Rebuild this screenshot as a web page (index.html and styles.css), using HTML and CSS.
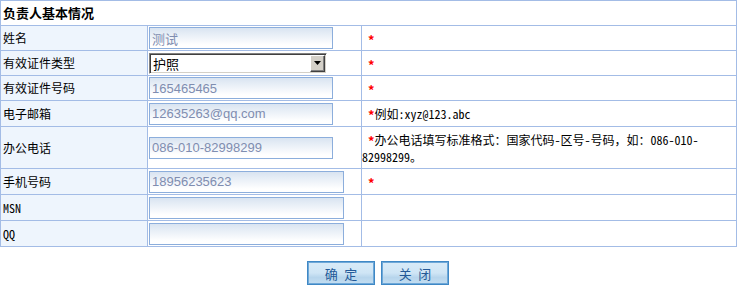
FILE: index.html
```html
<!DOCTYPE html>
<html lang="zh-CN">
<head>
    <meta charset="UTF-8">
    <title>负责人基本情况</title>
    <link rel="stylesheet" href="styles.css">
</head>
<body>
    <!-- 负责人基本情况 -->
    <table class="info-table">
        <colgroup>
            <col class="col-label">
            <col class="col-field">
            <col>
        </colgroup>
        <tr class="title-row">
            <td colspan="3">负责人基本情况</td>
        </tr>
        <tr class="row">
            <td class="label">姓名</td>
            <td class="field"><input type="text" class="txt" value="测试"></td>
            <td class="note"><span class="req">*</span></td>
        </tr>
        <tr class="row">
            <td class="label">有效证件类型</td>
            <td class="field">
                <span class="select-wrap">
                    <select class="sel">
                        <option>护照</option>
                        <option>身份证</option>
                    </select>
                    <span class="select-btn">
                        <svg width="7" height="4" viewBox="0 0 7 4"><path d="M0 0h7L3.5 4z" fill="#000"/></svg>
                    </span>
                </span>
            </td>
            <td class="note"><span class="req">*</span></td>
        </tr>
        <tr class="row">
            <td class="label">有效证件号码</td>
            <td class="field"><input type="text" class="txt" value="165465465"></td>
            <td class="note"><span class="req">*</span></td>
        </tr>
        <tr class="row-lg">
            <td class="label">电子邮箱</td>
            <td class="field"><input type="text" class="txt" value="12635263@qq.com"></td>
            <td class="note"><span class="req">*</span>例如:xyz@123.abc</td>
        </tr>
        <tr class="row-tall">
            <td class="label">办公电话</td>
            <td class="field"><input type="text" class="txt" value="086-010-82998299"></td>
            <td class="note"><span class="req">*</span>办公电话填写标准格式：国家代码-区号-号码，如：086-010-<br>82998299。</td>
        </tr>
        <tr class="row-lg">
            <td class="label">手机号码</td>
            <td class="field"><input type="text" class="txt txt-wide" value="18956235623"></td>
            <td class="note"><span class="req">*</span></td>
        </tr>
        <tr class="row-lg">
            <td class="label">MSN</td>
            <td class="field"><input type="text" class="txt txt-wide"></td>
            <td class="note"></td>
        </tr>
        <tr class="row-lg">
            <td class="label">QQ</td>
            <td class="field"><input type="text" class="txt txt-wide"></td>
            <td class="note"></td>
        </tr>
    </table>

    <div class="actions">
        <button class="btn">确 定</button>
        <button class="btn">关 闭</button>
    </div>
</body>
</html>
```

FILE: styles.css
```css
body {
    margin: 0;
    padding: 0;
    background-color: #ffffff;
    font-family: "Noto Sans Mono CJK SC", "Noto Sans CJK SC", sans-serif;
    font-size: 12px;
    color: #000000;
}
.info-table {
    width: 737px;
    border-collapse: collapse;
    table-layout: fixed;
}
.col-label {
    width: 147px;
}
.col-field {
    width: 214px;
}
.info-table td {
    border: 1px solid #a3bce6;
    padding: 0;
    vertical-align: middle;
}
.title-row td {
    height: 24px;
    padding-left: 2px;
    font-size: 13px;
    font-weight: bold;
    line-height: 16px;
}
.row td {
    height: 24px;
}
.row-lg td {
    height: 25px;
}
.row-tall td {
    height: 41px;
}
.info-table .label {
    padding-left: 2px;
    background-color: #eef5fd;
    line-height: 16px;
}
.info-table .field {
    padding-left: 1px;
}
.note {
    text-indent: 6px;
    line-height: 17px;
}
.req {
    color: #ff0000;
    font-size: 13px;
    font-weight: bold;
    vertical-align: -2px;
    line-height: 1;
}
.txt {
    box-sizing: border-box;
    width: 184px;
    height: 22px;
    margin: 0;
    padding: 0 2px;
    border: 1px solid #8caedc;
    background: linear-gradient(to bottom, #d9e4f1, #ffffff 85%);
    font-family: "Liberation Sans", Arial, "Noto Sans CJK SC", sans-serif;
    font-size: 13px;
    color: #7f8db0;
    vertical-align: middle;
}
.txt-wide {
    width: 195px;
}
.select-wrap {
    position: relative;
    display: inline-block;
    vertical-align: middle;
}
.sel {
    box-sizing: border-box;
    width: 178px;
    height: 21px;
    margin: 0;
    padding: 0 0 0 3px;
    -webkit-appearance: none;
    appearance: none;
    border: 1px solid;
    border-color: #808080 #ffffff #ffffff #808080;
    box-shadow: inset 1px 1px 0 #404040, inset -1px -1px 0 #d4d0c8;
    border-radius: 0;
    background-color: #ffffff;
    font-family: "Noto Sans CJK SC", sans-serif;
    font-size: 13px;
    color: #000000;
    display: block;
}
.select-btn {
    position: absolute;
    top: 2px;
    right: 2px;
    box-sizing: border-box;
    width: 15px;
    height: 17px;
    background-color: #d4d0c8;
    border: 1px solid;
    border-color: #ffffff #404040 #404040 #ffffff;
    box-shadow: inset -1px -1px 0 #808080;
    display: flex;
    align-items: center;
    justify-content: center;
}
.select-btn svg {
    display: block;
}
.actions {
    display: flex;
    justify-content: center;
    gap: 6px;
    margin-top: 14px;
    padding-left: 19px;
}
.btn {
    box-sizing: border-box;
    width: 68px;
    height: 24px;
    margin: 0;
    padding: 0;
    border: 1px solid #3f88c5;
    box-shadow: inset 0 0 0 1px #6ea8d8;
    background: linear-gradient(to bottom, #d8ebf8 0%, #cfe5f5 50%, #b7d5ec 70%, #c3def2 100%);
    font-family: "Noto Sans Mono CJK SC", "Noto Sans CJK SC", sans-serif;
    font-size: 13px;
    color: #245a98;
    cursor: pointer;
}
```
